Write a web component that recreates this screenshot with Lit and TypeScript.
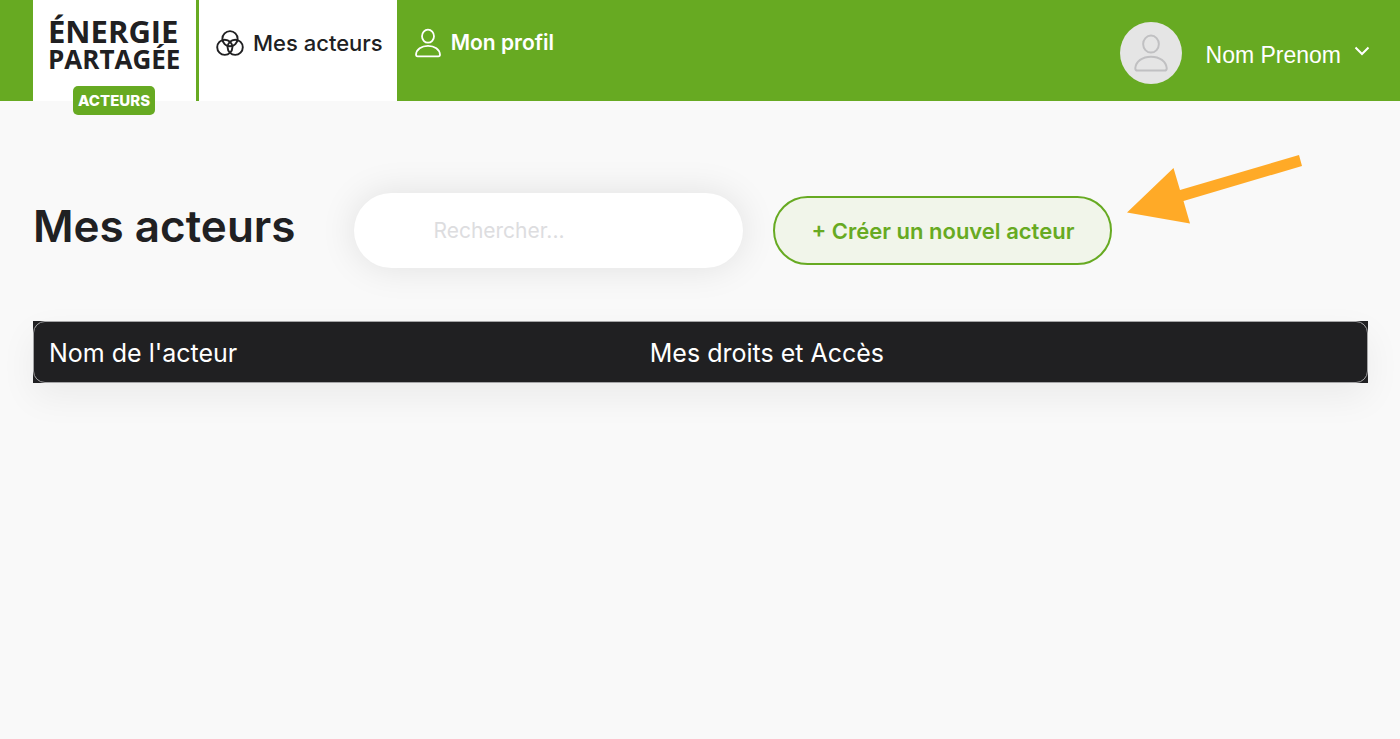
import { LitElement, html, css, svg } from "lit";
import { customElement, property } from "lit/decorators.js";

const person = svg`
  <ellipse cx="13" cy="7.2" rx="6" ry="6.5"></ellipse>
  <path d="M1 25.6C1.4 20.4 6.4 16.8 13 16.8S24.6 20.4 25 25.6Q25 27.4 23.4 27.4H2.6Q1 27.4 1 25.6Z"></path>
`;

@customElement("app-header")
class AppHeader extends LitElement {
  @property() user = "";

  static styles = css`
    :host {
      display: block;
      background: #67aa22;
    }
    .bar {
      display: flex;
      height: 101px;
      padding: 0 30px 0 33px;
    }
    a {
      color: inherit;
      text-decoration: none;
    }
    .logo {
      position: relative;
      box-sizing: border-box;
      width: 163px;
      padding: 14px 0 0 15px;
      background: #fff;
      color: #202022;
      font-family: "Open Sans", "Noto Sans", sans-serif;
      font-weight: 700;
      white-space: nowrap;
    }
    .line {
      display: block;
      font-size: 31px;
      line-height: 34px;
    }
    .line.small {
      font-size: 26px;
      line-height: 22px;
    }
    .tag {
      position: absolute;
      left: 40px;
      top: 86px;
      padding: 0 5px;
      border-radius: 5px;
      background: #67aa22;
      color: #fff;
      font: 800 15px/29px Inter, sans-serif;
    }
    nav {
      display: flex;
      margin-left: 3px;
    }
    .item {
      display: flex;
      align-items: flex-start;
      box-sizing: border-box;
      padding: 28px 14px 0 17px;
      color: #fff;
      font-size: 21px;
      line-height: 30px;
      font-weight: 600;
      white-space: nowrap;
    }
    .item.active {
      background: #fff;
      color: #202022;
      font-size: 22px;
      font-weight: 500;
    }
    svg {
      display: block;
      fill: none;
      stroke: currentColor;
    }
    .item svg {
      flex: none;
      margin-right: 9px;
    }
    .account {
      display: flex;
      align-items: center;
      margin: 0 0 0 auto;
      padding: 4px 0 0;
      border: 0;
      background: none;
      color: #fff;
      font: 23px/30px "Liberation Sans", Arial, sans-serif;
      cursor: pointer;
    }
    .avatar {
      display: flex;
      align-items: center;
      justify-content: center;
      width: 62px;
      height: 62px;
      margin-right: 24px;
      border-radius: 50%;
      background: #e5e5e5;
      color: #c0c0c2;
    }
    .chevron {
      margin: 0 0 4px 13px;
    }
    .name {
      padding-top: 4px;
    }
  `;

  render() {
    return html`
      <header class="bar">
        <a class="logo" href="#">
          <span class="line">ÉNERGIE</span>
          <span class="line small">PARTAGÉE</span>
          <span class="tag">ACTEURS</span>
        </a>
        <nav>
          <a class="item active" href="#acteurs" aria-current="page">
            <svg width="28" height="30" viewBox="0 0 28 30" stroke-width="1.9">
              <circle cx="14" cy="10.7" r="7.6"></circle>
              <circle cx="8.8" cy="19.3" r="7.6"></circle>
              <circle cx="19.2" cy="19.3" r="7.6"></circle>
            </svg>
            Mes acteurs
          </a>
          <a class="item" href="#profil">
            <svg width="28" height="30" viewBox="-1 -1 28 30" stroke-width="1.8">${person}</svg>
            Mon profil
          </a>
        </nav>
        <button class="account" type="button" aria-haspopup="true">
          <span class="avatar">
            <svg width="36" height="38" viewBox="-0.5 -0.5 27 29" stroke-width="1.5">${person}</svg>
          </span>
          <span class="name">${this.user}</span>
          <svg class="chevron" width="16" height="10" viewBox="0 0 16 10" stroke-width="2">
            <path d="M1.5 1.5 8 8 14.5 1.5"></path>
          </svg>
        </button>
      </header>
    `;
  }
}

@customElement("app-root")
class AppRoot extends LitElement {
  static styles = css`
    :host {
      display: block;
      min-height: 100vh;
      background: #f9f9f9;
      color: #202022;
      font-family: Inter, sans-serif;
    }
    main {
      padding: 92px 32px 40px 33px;
    }
    .toolbar {
      display: flex;
      align-items: center;
      margin-bottom: 53px;
    }
    h1 {
      margin: 0 59px 10px 0;
      font-size: 44px;
      line-height: 56px;
      font-weight: 600;
      white-space: nowrap;
    }
    .search {
      box-sizing: border-box;
      width: 389px;
      height: 75px;
      margin: 0 30px 0 0;
      padding: 0 30px 0 79px;
      border: 0;
      border-radius: 38px;
      outline: 0;
      background: #fff;
      box-shadow: 0 0 36px rgba(0, 0, 0, 0.1);
      color: #202022;
      font: 21px/30px Inter, sans-serif;
    }
    .search::placeholder {
      color: #dddddf;
      opacity: 1;
    }
    .create {
      position: relative;
    }
    .create button {
      display: block;
      box-sizing: border-box;
      height: 69px;
      padding: 0 36px;
      border: 2px solid #67aa22;
      border-radius: 35px;
      background: #f1f5ea;
      color: #67aa22;
      font: 600 22px/30px Inter, sans-serif;
      white-space: nowrap;
      cursor: pointer;
    }
    .arrow {
      position: absolute;
      left: calc(100% + 14px);
      bottom: 41px;
      display: block;
    }
    .card {
      position: relative;
      background: #202022;
      box-shadow: 0 14px 36px rgba(0, 0, 0, 0.06);
    }
    .card::after {
      content: "";
      position: absolute;
      inset: 0;
      border: 1px solid #a5a5a7;
      border-radius: 12px;
      pointer-events: none;
    }
    table {
      width: 100%;
      border-collapse: collapse;
      table-layout: fixed;
    }
    th {
      box-sizing: border-box;
      padding: 17px 16px 15px;
      color: #fff;
      font-size: 25px;
      line-height: 30px;
      font-weight: 400;
      text-align: left;
    }
    .name {
      width: 45%;
    }
  `;

  render() {
    return html`
      <app-header user="Nom Prenom"></app-header>
      <main>
        <div class="toolbar">
          <h1>Mes acteurs</h1>
          <input class="search" type="search" placeholder="Rechercher..." aria-label="Rechercher" />
          <div class="create">
            <button type="button">+ Créer un nouvel acteur</button>
            <svg class="arrow" width="176" height="70" viewBox="0 0 176 70" fill="#ffaa27" aria-hidden="true">
              <path d="M1 58.5 47.5 14 54 36 173 1 176 12 57.5 47 64 69.5Z"></path>
            </svg>
          </div>
        </div>
        <div class="card">
          <table>
            <thead>
              <tr>
                <th class="name" scope="col">Nom de l'acteur</th>
                <th scope="col">Mes droits et Accès</th>
              </tr>
            </thead>
          </table>
        </div>
      </main>
    `;
  }
}
